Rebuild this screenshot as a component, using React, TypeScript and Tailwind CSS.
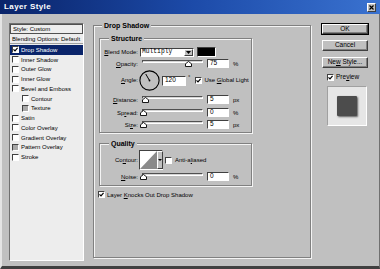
import React from "react";

const SANS = "font-['Liberation_Sans',Arial,sans-serif]";

function Check({ checked = false, gray = false }: { checked?: boolean; gray?: boolean }) {
  return (
    <span
      className={`inline-flex h-[7px] w-[7px] shrink-0 items-center justify-center border border-t-[#404040] border-l-[#404040] border-r-white border-b-white ${
        gray ? "bg-[#a8a8a8]" : "bg-white"
      }`}
    >
      {checked && (
        <svg width="5" height="5" viewBox="0 0 5 5">
          <path d="M0.5 2.3 L2 3.8 L4.6 0.8" fill="none" stroke="#000" strokeWidth="1.2" />
        </svg>
      )}
    </span>
  );
}

function Field({ value, w = 22, h = 9 }: { value: string; w?: number; h?: number }) {
  return (
    <div
      className={`flex items-center bg-white border border-t-[#404040] border-l-[#404040] border-r-white border-b-white pl-[2px] text-[6.5px] leading-none text-black ${
        w === 24 ? "w-[24px]" : "w-[22px]"
      } ${h === 10 ? "h-[10px]" : "h-[9px]"}`}
    >
      {value}
    </div>
  );
}

function Slider({ pos }: { pos: number }) {
  return (
    <div className="relative h-[9px] w-[61px] shrink-0">
      <div className="absolute left-0 right-0 top-[1px] h-[3px] border-t border-l border-t-[#505050] border-l-[#505050] border-b border-r border-b-white border-r-white bg-[#d4d4d4]" />
      <svg
        className="absolute top-[2px]"
        style={{ left: pos - 3 }}
        width="7"
        height="6"
        viewBox="0 0 7 6"
      >
        <path d="M3.5 0.5 L6.5 2.8 L6.5 5.5 L0.5 5.5 L0.5 2.8 Z" fill="#fff" stroke="#000" strokeWidth="0.9" />
      </svg>
    </div>
  );
}

function Label({ children }: { children: React.ReactNode }) {
  return <div className="w-[38px] shrink-0 text-right text-[6px] leading-none">{children}</div>;
}

function U({ children }: { children: React.ReactNode }) {
  return <span className="underline underline-offset-[1px]">{children}</span>;
}

function SliderRow({
  label,
  pos,
  value,
  unit,
  className = "",
}: {
  label: React.ReactNode;
  pos: number;
  value: string;
  unit: string;
  className?: string;
}) {
  return (
    <div className={`flex h-[9px] items-center ${className}`}>
      <Label>{label}</Label>
      <div className="ml-[4px]">
        <Slider pos={pos} />
      </div>
      <div className="ml-[4px]">
        <Field value={value} />
      </div>
      <span className="ml-[4px] text-[6px] leading-none">{unit}</span>
    </div>
  );
}

function GroupBox({
  title,
  titleClass,
  className,
  children,
}: {
  title: string;
  titleClass: string;
  className: string;
  children: React.ReactNode;
}) {
  return (
    <div
      className={`relative border border-[#808080] shadow-[inset_1px_1px_0_#f4f4f4,1px_1px_0_#f4f4f4] ${className}`}
    >
      <span
        className={`absolute top-[-5px] bg-[#c0c0c0] px-[2px] text-[7px] font-bold leading-[9px] ${titleClass}`}
      >
        {title}
      </span>
      {children}
    </div>
  );
}

function WinButton({
  children,
  def = false,
}: {
  children: React.ReactNode;
  def?: boolean;
}) {
  const inner = (
    <div className="flex h-full w-full items-center justify-center border border-t-white border-l-white border-r-[#404040] border-b-[#404040] bg-[#c0c0c0] text-[6.5px] leading-none shadow-[inset_-1px_-1px_0_#808080]">
      {children}
    </div>
  );
  if (def) {
    return <div className="h-[12px] w-[48px] border border-black">{inner}</div>;
  }
  return <div className="mx-[1px] h-[11px] w-[46px]">{inner}</div>;
}

const listItems: { name: string; checked?: boolean; indent?: boolean; gray?: boolean; sel?: boolean }[] = [
  { name: "Drop Shadow", checked: true, sel: true },
  { name: "Inner Shadow" },
  { name: "Outer Glow" },
  { name: "Inner Glow" },
  { name: "Bevel and Emboss" },
  { name: "Contour", indent: true },
  { name: "Texture", indent: true, gray: true },
  { name: "Satin" },
  { name: "Color Overlay" },
  { name: "Gradient Overlay" },
  { name: "Pattern Overlay", gray: true },
  { name: "Stroke" },
];

export default function App() {
  const ang = (120 * Math.PI) / 180;
  const cx = 10.5;
  const cy = 10.5;
  const lx = cx + Math.cos(ang) * 7.5;
  const ly = cy - Math.sin(ang) * 7.5;
  return (
    <div className={`flex h-[269px] w-[380px] flex-col overflow-hidden bg-[#c0c0c0] text-black ${SANS}`}>
      {/* Title bar */}
      <div className="flex h-[14px] shrink-0 items-center justify-between bg-linear-to-r from-[#0a246a] via-[#1c4aa8] to-[#3a72d0] pl-[4px] pr-[4px]">
        <span className="text-[8px] font-bold leading-none tracking-[0.4px] text-white">Layer Style</span>
        <div className="flex h-[9px] w-[9px] items-center justify-center border border-t-white border-l-white border-r-[#404040] border-b-[#404040] bg-[#c0c0c0]">
          <svg width="5" height="5" viewBox="0 0 5 5">
            <path d="M0.5 0.5 L4.5 4.5 M4.5 0.5 L0.5 4.5" stroke="#000" strokeWidth="1.2" />
          </svg>
        </div>
      </div>

      {/* Body */}
      <div className="flex flex-1 items-start border-l-2 border-l-[#e4e4e4] border-r border-r-[#707070] border-b-[3px] border-b-[#404040] pl-[7px] pt-[9px]">
        {/* Left list */}
        <div className="flex h-[238px] w-[75px] shrink-0 flex-col border border-t-[#707070] border-l-[#707070] border-r-white border-b-white bg-[#ededed] text-[6px] leading-none">
          <div className="flex h-[10px] items-center border border-[#505050] pl-[2px]">Style: Custom</div>
          <div className="flex h-[10px] items-center border-b border-b-[#a0a0a0] pl-[2px]">Blending Options: Default</div>
          <div className="h-[1px]" />
          {listItems.map((it) => (
            <div
              key={it.name}
              className={`flex h-[9.75px] items-center gap-[2px] ${it.indent ? "pl-[12px]" : "pl-[2px]"} ${
                it.sel ? "bg-[#0a246a] text-white" : ""
              }`}
            >
              <Check checked={it.checked} gray={it.gray} />
              <span>{it.name}</span>
            </div>
          ))}
        </div>

        {/* Drop shadow group */}
        <GroupBox
          title="Drop Shadow"
          titleClass="left-[8px]"
          className="ml-[9px] mt-[2px] h-[233px] w-[218px] shrink-0 pl-[5px] pt-[12px]"
        >
          {/* Structure */}
          <GroupBox title="Structure" titleClass="left-[9px]" className="h-[95px] w-[153px] pt-[8px]">
            <div className="flex h-[10px] items-center">
              <Label>
                <U>B</U>lend Mode:
              </Label>
              <div className="ml-[2px] flex h-[9px] w-[54px] items-center border border-t-[#404040] border-l-[#404040] border-r-white border-b-white bg-white">
                <span className="flex-1 pl-[1px] font-['Liberation_Mono',monospace] text-[6.3px] leading-none">
                  Multiply
                </span>
                <div className="flex h-full w-[9px] items-center justify-center border border-t-white border-l-white border-r-[#404040] border-b-[#404040] bg-[#c0c0c0]">
                  <svg width="5" height="3" viewBox="0 0 5 3">
                    <path d="M0 0 L5 0 L2.5 3 Z" fill="#000" />
                  </svg>
                </div>
              </div>
              <div className="ml-[3px] h-[10px] w-[19px] border border-t-[#404040] border-l-[#404040] border-r-white border-b-white bg-black" />
            </div>

            <SliderRow label={<><U>O</U>pacity:</>} pos={46} value="75" unit="%" className="mt-[2px]" />

            <div className="mt-[2px] flex h-[20px] items-center">
              <Label>
                <U>A</U>ngle:
              </Label>
              <svg className="ml-[1px] shrink-0" width="21" height="21" viewBox="0 0 21 21">
                <circle cx={cx} cy={cy} r="9.6" fill="none" stroke="#000" strokeWidth="1.1" />
                <line x1={cx} y1={cy} x2={lx} y2={ly} stroke="#000" strokeWidth="1" />
                <circle cx={cx} cy={cy} r="0.9" fill="#000" />
              </svg>
              <div className="ml-[2px] mt-[1px]">
                <Field value="120" w={24} h={10} />
              </div>
              <span className="ml-[2px] self-start pt-[4px] text-[6px] leading-none">°</span>
              <div className="ml-[5px] flex items-center gap-[2px]">
                <Check checked />
                <span className="text-[6px] leading-none">
                  Use <U>G</U>lobal Light
                </span>
              </div>
            </div>

            <SliderRow label={<><U>D</U>istance:</>} pos={3} value="5" unit="px" className="mt-[5px]" />
            <SliderRow label={<>Sp<U>r</U>ead:</>} pos={1} value="0" unit="%" className="mt-[4px]" />
            <SliderRow label={<>Si<U>z</U>e:</>} pos={1} value="5" unit="px" className="mt-[3px]" />
          </GroupBox>

          {/* Quality */}
          <GroupBox title="Quality" titleClass="left-[9px]" className="mt-[10px] h-[43px] w-[153px] pt-[6px]">
            <div className="flex h-[20px] items-center">
              <Label>
                Co<U>n</U>tour:
              </Label>
              <div className="ml-[1px] flex h-[20px] w-[24px] border border-t-[#404040] border-l-[#404040] border-r-white border-b-white">
                <svg className="shrink-0" width="17" height="18" viewBox="0 0 17 18">
                  <rect x="0" y="0" width="17" height="18" fill="#fff" />
                  <path d="M0 18 L17 0 L17 18 Z" fill="#8a8a8a" />
                </svg>
                <div className="flex flex-1 items-center justify-center border border-t-white border-l-white border-r-[#404040] border-b-[#404040] bg-[#c0c0c0]">
                  <svg width="4" height="2" viewBox="0 0 4 2">
                    <path d="M0 0 L4 0 L2 2 Z" fill="#000" />
                  </svg>
                </div>
              </div>
              <div className="ml-[2px] flex items-center gap-[3px]">
                <Check />
                <span className="text-[6px] leading-none">
                  Anti-a<U>l</U>iased
                </span>
              </div>
            </div>
            <SliderRow label={<><U>N</U>oise:</>} pos={1} value="0" unit="%" className="mt-[2px]" />
          </GroupBox>

          <div className="ml-[-1px] mt-[5px] flex items-center gap-[2px]">
            <Check checked />
            <span className="text-[6px] leading-none">
              Layer <U>K</U>nocks Out Drop Shadow
            </span>
          </div>
        </GroupBox>

        {/* Buttons */}
        <div className="ml-[10px] flex w-[48px] shrink-0 flex-col">
          <WinButton def>OK</WinButton>
          <div className="mt-[5px]">
            <WinButton>Cancel</WinButton>
          </div>
          <div className="mt-[6px]">
            <WinButton>
              <span>
                Ne<U>w</U> Style...
              </span>
            </WinButton>
          </div>
          <div className="ml-[6px] mt-[6px] flex items-center gap-[2px]">
            <Check checked />
            <span className="text-[6.5px] leading-none">
              Pre<U>v</U>iew
            </span>
          </div>
          <div className="ml-[6px] mt-[5px] flex h-[40px] w-[40px] items-center justify-center border border-t-[#a0a0a0] border-l-[#a0a0a0] border-r-white border-b-white bg-[#e6e6e6]">
            <div className="h-[20px] w-[20px] rounded-[1px] bg-[#4c4c4c] shadow-[1px_1px_2px_rgba(0,0,0,0.6)]" />
          </div>
        </div>
      </div>
    </div>
  );
}
